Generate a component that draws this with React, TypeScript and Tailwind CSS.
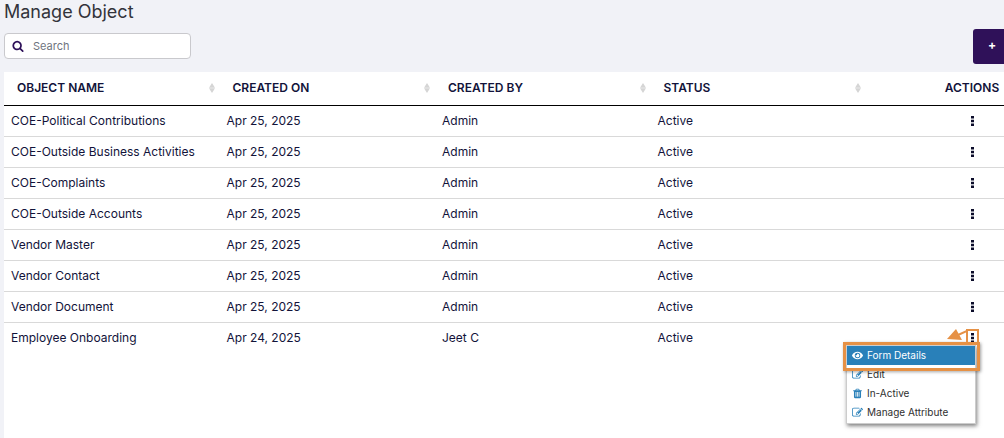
import type { ReactNode } from "react";
import { FaEye } from "react-icons/fa";

const ICONS = {
  search:
    "M1216 832q0-185-131.5-316.5t-316.5-131.5-316.5 131.5-131.5 316.5 131.5 316.5 316.5 131.5 316.5-131.5 131.5-316.5zm512 832q0 52-38 90t-90 38q-54 0-90-38l-343-342q-179 124-399 124-143 0-273.5-55.5t-225-150-150-225-55.5-273.5 55.5-273.5 150-225 225-150 273.5-55.5 273.5 55.5 225 150 150 225 55.5 273.5q0 220-124 399l343 343q37 37 37 90z",
  edit: "M888 1184l116-116-152-152-116 116v56h96v96h56zm440-720q-16-16-33 1l-350 350q-17 17-1 33t33-1l350-350q17-17 1-33zm80 594v190q0 119-84.5 203.5t-203.5 84.5h-832q-119 0-203.5-84.5t-84.5-203.5v-832q0-119 84.5-203.5t203.5-84.5h832q63 0 117 25 15 7 18 23 3 17-9 29l-49 49q-14 14-32 8-23-6-45-6h-832q-66 0-113 47t-47 113v832q0 66 47 113t113 47h832q66 0 113-47t47-113v-126q0-13 9-22l64-64q15-15 35-7t20 29zm-96-738l288 288-672 672h-288v-288zm444 132l-92 92-288-288 92-92q28-28 68-28t68 28l152 152q28 28 28 68t-28 68z",
  trash:
    "M704 1376v-704q0-14-9-23t-23-9h-64q-14 0-23 9t-9 23v704q0 14 9 23t23 9h64q14 0 23-9t9-23zm256 0v-704q0-14-9-23t-23-9h-64q-14 0-23 9t-9 23v704q0 14 9 23t23 9h64q14 0 23-9t9-23zm256 0v-704q0-14-9-23t-23-9h-64q-14 0-23 9t-9 23v704q0 14 9 23t23 9h64q14 0 23-9t9-23zm-544-992h448l-48-117q-7-9-17-11h-317q-10 2-17 11zm928 32v64q0 14-9 23t-23 9h-96v948q0 83-47 143.5t-113 60.5h-832q-66 0-113-58.5t-47-141.5v-952h-96q-14 0-23-9t-9-23v-64q0-14 9-23t23-9h309l70-167q15-37 54-63t79-26h320q40 0 79 26t54 63l70 167h309q14 0 23 9t9 23z",
};

type IconName = keyof typeof ICONS;

const columns = ["Object Name", "Created On", "Created By", "Status"];

const rows = [
  ["COE-Political Contributions", "Apr 25, 2025", "Admin", "Active"],
  ["COE-Outside Business Activities", "Apr 25, 2025", "Admin", "Active"],
  ["COE-Complaints", "Apr 25, 2025", "Admin", "Active"],
  ["COE-Outside Accounts", "Apr 25, 2025", "Admin", "Active"],
  ["Vendor Master", "Apr 25, 2025", "Admin", "Active"],
  ["Vendor Contact", "Apr 25, 2025", "Admin", "Active"],
  ["Vendor Document", "Apr 25, 2025", "Admin", "Active"],
  ["Employee Onboarding", "Apr 24, 2025", "Jeet C", "Active"],
];

const menu: { icon: IconName; label: string }[] = [
  { icon: "edit", label: "Edit" },
  { icon: "trash", label: "In-Active" },
  { icon: "edit", label: "Manage Attribute" },
];

function Icon({ name, className }: { name: IconName; className: string }) {
  return (
    <svg viewBox="0 0 1792 1792" fill="currentColor" className={className} aria-hidden="true">
      <path d={ICONS[name]} />
    </svg>
  );
}

function SortIcon() {
  return (
    <svg viewBox="0 0 6 10" className="h-[10px] w-[6px] shrink-0 fill-[#d5d5d5]" aria-hidden="true">
      <path d="M3 0 6 4.7H0zM0 5.3h6L3 10z" />
    </svg>
  );
}

function ActionCell({ children }: { children: ReactNode }) {
  return <div className="relative ml-auto flex h-[30px] w-16 items-center justify-center">{children}</div>;
}

function RowMenu() {
  return (
    <>
      <ul className="absolute top-[22px] right-7 z-10 w-[130px] border border-[#ccc] bg-white pb-px text-left text-[10px] shadow-[1px_2px_4px_rgba(0,0,0,0.5)]">
        <li>
          <button className="flex h-[19px] w-full items-center gap-1 bg-[#2980b9] px-[5px] text-white">
            <FaEye className="h-[11px] w-[11px] shrink-0" />
            <span className="whitespace-nowrap">Form Details</span>
          </button>
        </li>
        {menu.map((item) => (
          <li key={item.label}>
            <button className="flex h-[19px] w-full items-center gap-1 px-[5px] text-[#2f2f2f]">
              <Icon name={item.icon} className="h-[11px] w-[11px] shrink-0 text-[#2980b9]" />
              <span className="whitespace-nowrap">{item.label}</span>
            </button>
          </li>
        ))}
      </ul>
      {/* callouts: open menu item and the trigger it came from */}
      <div className="pointer-events-none absolute top-[19px] right-[24px] z-20 h-[29px] w-[137px] border-3 border-[#e69145] shadow-[1px_1px_3px_rgba(0,0,0,0.35)]" />
      <div className="pointer-events-none absolute top-[6px] right-[25px] z-20 h-[16px] w-[13px] border-2 border-[#e69145]" />
      <svg
        viewBox="0 0 20 13"
        className="pointer-events-none absolute top-[5px] right-[37px] z-20 h-[13px] w-[20px]"
        aria-hidden="true"
      >
        <path d="M20 3 11 7" stroke="#e69145" strokeWidth="2" />
        <path d="M0 11 9 1 15 12z" fill="#e69145" />
      </svg>
    </>
  );
}

export default function App() {
  return (
    <div className="flex min-h-screen flex-col overflow-hidden bg-[#f1f2f7] pl-1 font-['Inter',sans-serif] text-[#12133a]">
      <h1 className="h-[29px] text-[18px] leading-6 text-[#33343b]">Manage Object</h1>

      <div className="flex h-[43px] items-start justify-between">
        <label className="mt-1 flex h-[26px] w-[187px] items-center gap-[9px] rounded-[4px] border border-[#c9c9cd] bg-white pl-[7px]">
          <Icon name="search" className="h-3 w-3 shrink-0 text-[#2d1059]" />
          <input
            type="text"
            aria-label="Search"
            placeholder="Search"
            className="w-full min-w-0 text-[11px] outline-none placeholder:text-[#6f7480]"
          />
        </label>
        <button
          aria-label="Add"
          className="flex h-[35px] w-[31px] items-center rounded-l-[3px] bg-[#2f1159] pb-1 pl-[15px] text-[12px] font-bold text-white"
        >
          +
        </button>
      </div>

      <div className="flex-1 bg-white">
        <table className="w-full table-fixed border-collapse text-[12px]">
          <thead>
            <tr className="h-[33px] border-b border-black">
              {columns.map((col) => (
                <th key={col} scope="col" className="w-[21.55%] p-0 pr-[5px] pl-[13px] font-semibold">
                  <div className="flex items-center justify-between uppercase">
                    {col}
                    <SortIcon />
                  </div>
                </th>
              ))}
              <th scope="col" className="p-0 font-semibold uppercase">
                <ActionCell>Actions</ActionCell>
              </th>
            </tr>
          </thead>
          <tbody>
            {rows.map((row, i) => (
              <tr key={row[0]} className="h-[31px] border-b border-[#d9d9d9] last:border-b-0">
                {row.map((cell, j) => (
                  <td key={j} className="p-0 pl-[7px] whitespace-nowrap">
                    {cell}
                  </td>
                ))}
                <td className="p-0">
                  <ActionCell>
                    <button aria-label={`Actions for ${row[0]}`}>
                      <svg viewBox="0 0 3 10" className="h-[10px] w-[3px] fill-[#0b0c2a]">
                        <path d="M0 0h3v2.4H0zM0 3.8h3v2.4H0zM0 7.6h3V10H0z" />
                      </svg>
                    </button>
                    {i === rows.length - 1 && <RowMenu />}
                  </ActionCell>
                </td>
              </tr>
            ))}
          </tbody>
        </table>
      </div>
    </div>
  );
}
